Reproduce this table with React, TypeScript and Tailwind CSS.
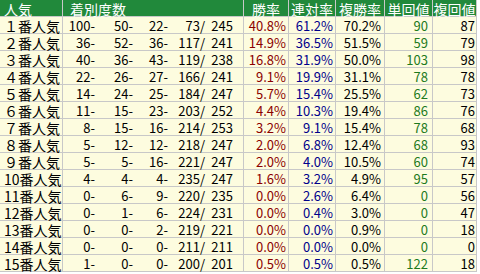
import React from "react";

type Row = {
  label: string;
  c: [string, string, string, string, string];
  win: string;
  ren: string;
  fuku: string;
  tan: string;
  fk: string;
};

const rows: Row[] = [
  { label: "１番人気", c: ["100-", "50-", "22-", "73/", "245"], win: "40.8%", ren: "61.2%", fuku: "70.2%", tan: "90", fk: "87" },
  { label: "２番人気", c: ["36-", "52-", "36-", "117/", "241"], win: "14.9%", ren: "36.5%", fuku: "51.5%", tan: "59", fk: "79" },
  { label: "３番人気", c: ["40-", "36-", "43-", "119/", "238"], win: "16.8%", ren: "31.9%", fuku: "50.0%", tan: "103", fk: "98" },
  { label: "４番人気", c: ["22-", "26-", "27-", "166/", "241"], win: "9.1%", ren: "19.9%", fuku: "31.1%", tan: "78", fk: "78" },
  { label: "５番人気", c: ["14-", "24-", "25-", "184/", "247"], win: "5.7%", ren: "15.4%", fuku: "25.5%", tan: "62", fk: "73" },
  { label: "６番人気", c: ["11-", "15-", "23-", "203/", "252"], win: "4.4%", ren: "10.3%", fuku: "19.4%", tan: "86", fk: "76" },
  { label: "７番人気", c: ["8-", "15-", "16-", "214/", "253"], win: "3.2%", ren: "9.1%", fuku: "15.4%", tan: "78", fk: "68" },
  { label: "８番人気", c: ["5-", "12-", "12-", "218/", "247"], win: "2.0%", ren: "6.8%", fuku: "12.4%", tan: "68", fk: "93" },
  { label: "９番人気", c: ["5-", "5-", "16-", "221/", "247"], win: "2.0%", ren: "4.0%", fuku: "10.5%", tan: "60", fk: "74" },
  { label: "10番人気", c: ["4-", "4-", "4-", "235/", "247"], win: "1.6%", ren: "3.2%", fuku: "4.9%", tan: "95", fk: "57" },
  { label: "11番人気", c: ["0-", "6-", "9-", "220/", "235"], win: "0.0%", ren: "2.6%", fuku: "6.4%", tan: "0", fk: "56" },
  { label: "12番人気", c: ["0-", "1-", "6-", "224/", "231"], win: "0.0%", ren: "0.4%", fuku: "3.0%", tan: "0", fk: "47" },
  { label: "13番人気", c: ["0-", "0-", "2-", "219/", "221"], win: "0.0%", ren: "0.0%", fuku: "0.9%", tan: "0", fk: "18" },
  { label: "14番人気", c: ["0-", "0-", "0-", "211/", "211"], win: "0.0%", ren: "0.0%", fuku: "0.0%", tan: "0", fk: "0" },
  { label: "15番人気", c: ["1-", "0-", "0-", "200/", "201"], win: "0.5%", ren: "0.5%", fuku: "0.5%", tan: "122", fk: "18" },
];

const head = "h-[16px] bg-[#21893b] text-white text-[14px] leading-[18px] whitespace-nowrap";
const cell = "h-[16px] bg-[#fdfcdf] leading-[18px] whitespace-nowrap";
const num = "text-[13px]";

export default function App() {
  return (
    <div
      className="w-[480px] h-[274px] bg-white overflow-hidden"
      style={{ fontFamily: '"Noto Sans CJK JP", "Noto Sans", sans-serif' }}
    >
      <div className="grid w-[477px] grid-cols-[62px_180px_44px_46px_48px_47px_43px] grid-rows-[repeat(16,16px)] gap-px bg-[#c8c8c8] pr-px pb-px">
        <div className={`${head} pl-[4px]`}>人気</div>
        <div className={`${head} pl-[7px]`}>着別度数</div>
        <div className={`${head} text-center`}>勝率</div>
        <div className={`${head} text-center`}>連対率</div>
        <div className={`${head} text-center`}>複勝率</div>
        <div className={`${head} text-center`}>単回値</div>
        <div className={`${head} text-center`}>複回値</div>
        {rows.map((r) => (
          <React.Fragment key={r.label}>
            <div className={`${cell} text-[14px] pl-[4px] text-black`}>{r.label}</div>
            <div className={`${cell} ${num} flex text-black`}>
              <span className="w-[32px] text-right">{r.c[0]}</span>
              <span className="w-[38px] text-right">{r.c[1]}</span>
              <span className="w-[35px] text-right">{r.c[2]}</span>
              <span className="w-[37px] text-right">{r.c[3]}</span>
              <span className="w-[28px] text-right">{r.c[4]}</span>
            </div>
            <div className={`${cell} ${num} text-right pr-[2px] text-[#8b0000]`}>{r.win}</div>
            <div className={`${cell} ${num} text-right pr-[2px] text-[#00008b]`}>{r.ren}</div>
            <div className={`${cell} ${num} text-right pr-[3px] text-black`}>{r.fuku}</div>
            <div className={`${cell} ${num} text-right pr-[4px] text-[#1d7a1d]`}>{r.tan}</div>
            <div className={`${cell} ${num} text-right pr-[1px] text-black`}>{r.fk}</div>
          </React.Fragment>
        ))}
      </div>
    </div>
  );
}
